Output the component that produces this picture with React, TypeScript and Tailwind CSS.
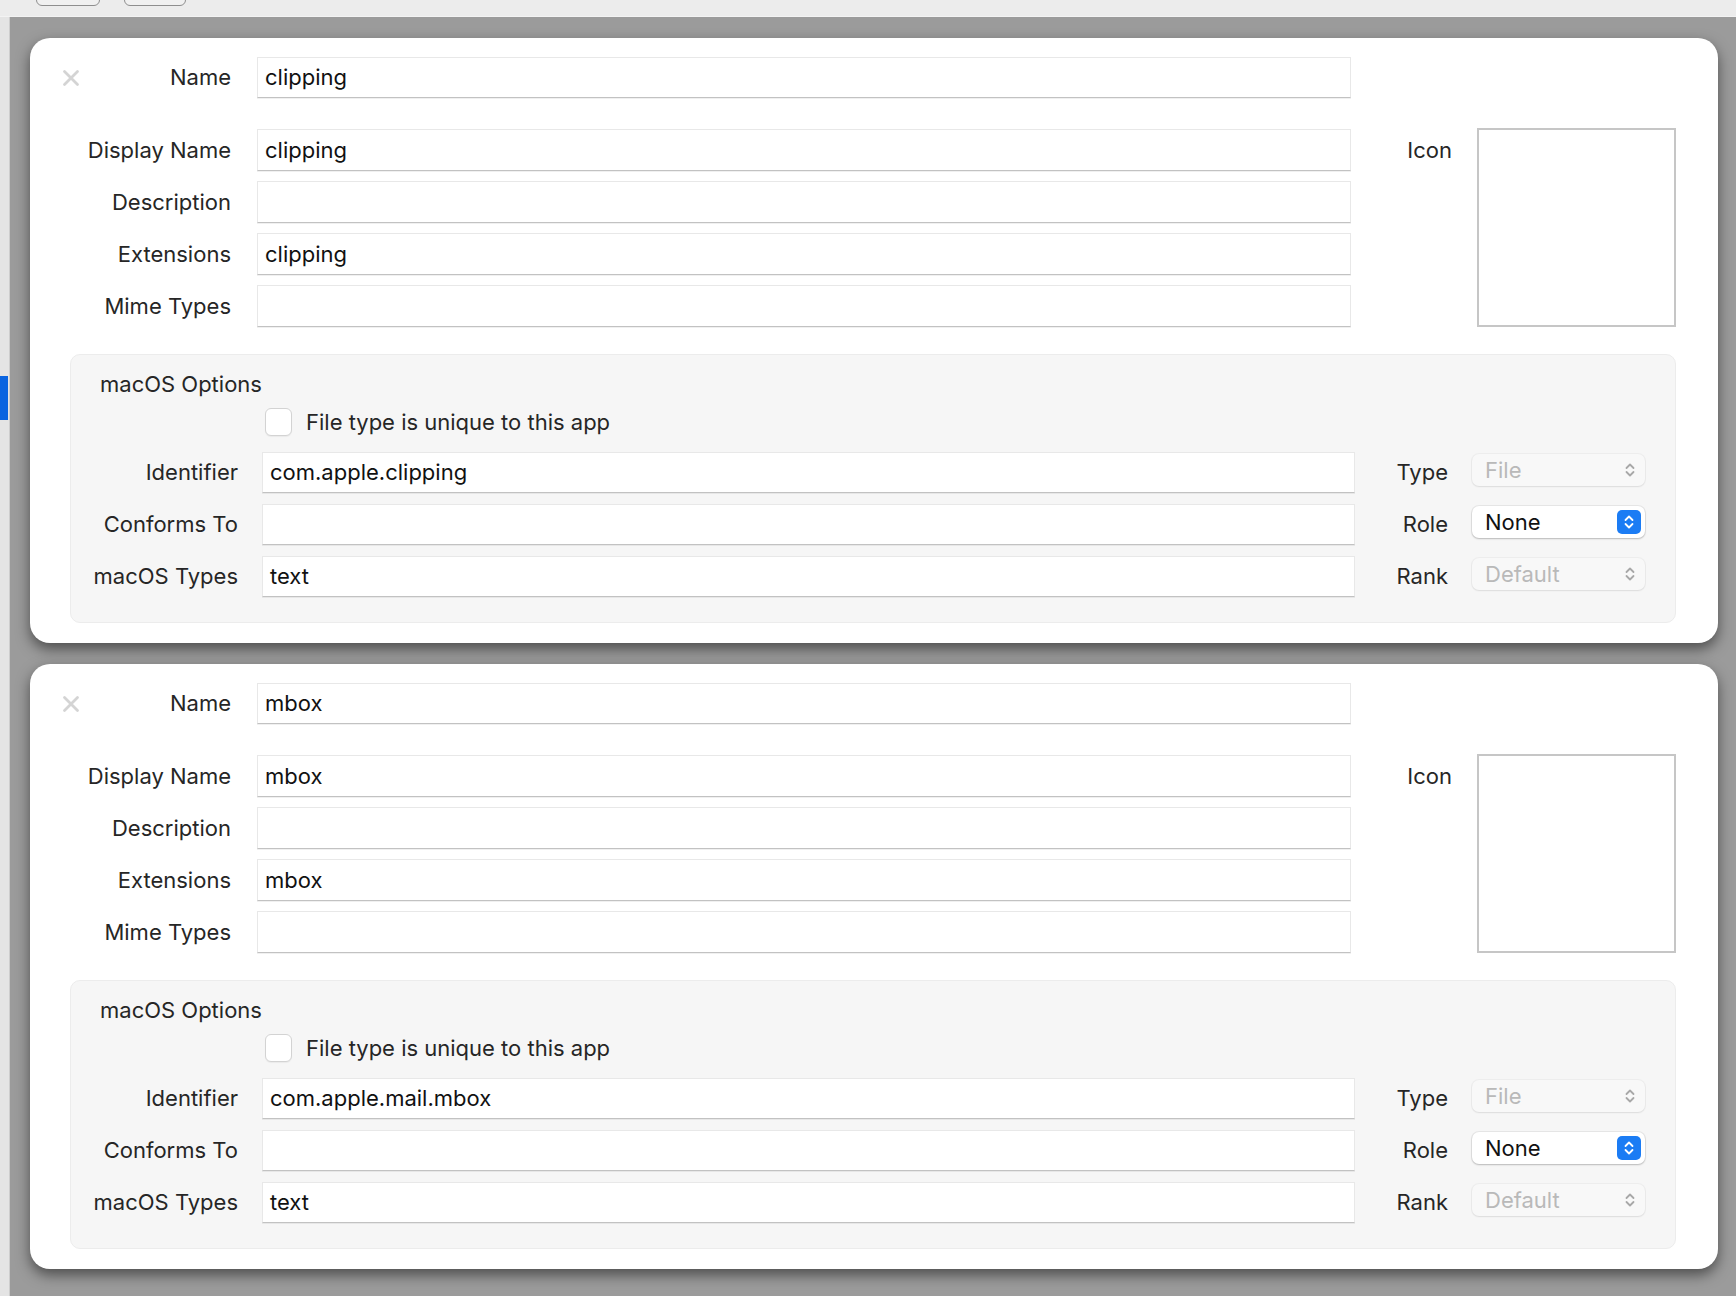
import React from "react";

type Entry = {
    name: string;
    displayName: string;
    extensions: string;
    identifier: string;
    macTypes: string;
};

const entries: Entry[] = [
    {
        name: "clipping",
        displayName: "clipping",
        extensions: "clipping",
        identifier: "com.apple.clipping",
        macTypes: "text",
    },
    {
        name: "mbox",
        displayName: "mbox",
        extensions: "mbox",
        identifier: "com.apple.mail.mbox",
        macTypes: "text",
    },
];

function Chevrons({ className }: { className?: string }) {
    return (
        <svg width="12" height="18" viewBox="0 0 12 18" className={className} fill="none">
            <path d="M2.5 7 L6 3.5 L9.5 7" stroke="currentColor" strokeWidth="1.8" strokeLinecap="round" strokeLinejoin="round" />
            <path d="M2.5 11 L6 14.5 L9.5 11" stroke="currentColor" strokeWidth="1.8" strokeLinecap="round" strokeLinejoin="round" />
        </svg>
    );
}

function CloseIcon() {
    return (
        <svg width="18" height="18" viewBox="0 0 18 18" className="text-[#d4d4d4]">
            <path d="M2.5 2.5 L15.5 15.5 M15.5 2.5 L2.5 15.5" stroke="currentColor" strokeWidth="2.8" strokeLinecap="round" />
        </svg>
    );
}

function TextBox({ value, width, height }: { value?: string; width: string; height: string }) {
    return (
        <div
            className={`${width} ${height} flex items-center pl-[7px] bg-white border border-[#e8e8e8] border-b-[#c2c2c2] shadow-[0_1px_0_rgba(0,0,0,0.06)] text-[#111111]`}
        >
            {value}
        </div>
    );
}

function Popup({ value, enabled }: { value: string; enabled?: boolean }) {
    if (enabled) {
        return (
            <div className="w-[173px] h-[32px] flex items-center justify-between pl-[13px] pr-[4px] rounded-[7px] bg-white shadow-[0_0_0_1px_rgba(0,0,0,0.06),0_1px_2px_rgba(0,0,0,0.2)] text-[#111111]">
                <span>{value}</span>
                <div className="w-[24px] h-[24px] rounded-[5px] bg-[#1b7cf4] flex items-center justify-center text-white">
                    <Chevrons />
                </div>
            </div>
        );
    }
    return (
        <div className="w-[173px] h-[32px] flex items-center justify-between pl-[13px] pr-[9px] rounded-[7px] bg-[#f8f8f8] shadow-[0_0_0_1px_rgba(0,0,0,0.035),0_1px_2px_rgba(0,0,0,0.07)] text-[#b9b9b9]">
            <span>{value}</span>
            <Chevrons className="text-[#a8a8a8]" />
        </div>
    );
}

function FieldRow({ label, value, first }: { label: string; value?: string; first?: boolean }) {
    return (
        <div className="flex items-center gap-[26px]">
            <div className="w-[169px] flex items-center justify-between">
                {first ? <CloseIcon /> : <span />}
                <span className="text-[#262626]">{label}</span>
            </div>
            <TextBox value={value} width="w-[1094px]" height={first ? "h-[41px]" : "h-[42px]"} />
        </div>
    );
}

function OptionRow({ label, value, side, popup, enabled }: { label: string; value?: string; side: string; popup: string; enabled?: boolean }) {
    return (
        <div className="h-[41px] flex items-center">
            <div className="w-[167px] text-right text-[#262626]">{label}</div>
            <div className="ml-[24px]">
                <TextBox value={value} width="w-[1093px]" height="h-[41px]" />
            </div>
            <div className="w-[93px] text-right text-[#262626]">{side}</div>
            <div className="ml-[24px] -mt-[5px]">
                <Popup value={popup} enabled={enabled} />
            </div>
        </div>
    );
}

function Card({ entry }: { entry: Entry }) {
    return (
        <div className="h-[605px] shrink-0 rounded-[20px] bg-white shadow-[0_6px_14px_rgba(0,0,0,0.5)] px-[32px] pt-[19px] flex flex-col">
            <div className="flex">
                <div className="flex flex-col">
                    <FieldRow label="Name" value={entry.name} first />
                    <div className="mt-[31px] flex flex-col gap-[10px]">
                        <FieldRow label="Display Name" value={entry.displayName} />
                        <FieldRow label="Description" />
                        <FieldRow label="Extensions" value={entry.extensions} />
                        <FieldRow label="Mime Types" />
                    </div>
                </div>
                <div className="ml-[10px] mt-[71px] flex items-start gap-[25px]">
                    <div className="w-[91px] h-[44px] flex items-center justify-end text-[#262626]">Icon</div>
                    <div className="w-[199px] h-[199px] border-2 border-[#c6c6c6] bg-white" />
                </div>
            </div>

            <div className="mt-[27px] ml-[8px] w-[1606px] h-[269px] rounded-[10px] bg-[#f6f6f6] border border-[#ececec] pt-[16px]">
                <div className="pl-[29px] leading-[26px] text-[#262626]">macOS Options</div>
                <div className="mt-[11px] pl-[194px] flex items-center gap-[14px] h-[28px]">
                    <div className="w-[27px] h-[28px] rounded-[6px] bg-white border border-[#d3d3d3] shadow-[0_1px_1px_rgba(0,0,0,0.05)]" />
                    <span className="leading-[28px] text-[#262626]">File type is unique to this app</span>
                </div>
                <div className="mt-[16px] flex flex-col gap-[11px]">
                    <OptionRow label="Identifier" value={entry.identifier} side="Type" popup="File" />
                    <OptionRow label="Conforms To" side="Role" popup="None" enabled />
                    <OptionRow label="macOS Types" value={entry.macTypes} side="Rank" popup="Default" />
                </div>
            </div>
        </div>
    );
}

export default function App() {
    return (
        <div className="w-[1736px] h-[1296px] overflow-hidden flex flex-col bg-[#ececec] font-['Inter','Noto_Sans',sans-serif] text-[22px]">
            <div className="h-[17px] shrink-0 flex gap-[24px] pl-[36px] overflow-hidden border-b border-[#f3f3f3]">
                <div className="w-[64px] h-[30px] -mt-[24px] rounded-[6px] border border-[#8e8e8e] bg-[#f0f0f0]" />
                <div className="w-[62px] h-[30px] -mt-[24px] rounded-[6px] border border-[#8e8e8e] bg-[#f0f0f0]" />
            </div>
            <div className="flex flex-1 min-h-0">
                <div className="w-[10px] shrink-0 bg-[#e4e4e4] border-r border-[#cdcdcd]">
                    <div className="mt-[359px] w-[8px] h-[44px] bg-[#0a64e0]" />
                </div>
                <div className="flex-1 bg-[#9b9b9b] pl-[20px] pr-[18px] pt-[21px] flex flex-col gap-[21px]">
                    {entries.map((e) => (
                        <Card key={e.name} entry={e} />
                    ))}
                </div>
            </div>
        </div>
    );
}
